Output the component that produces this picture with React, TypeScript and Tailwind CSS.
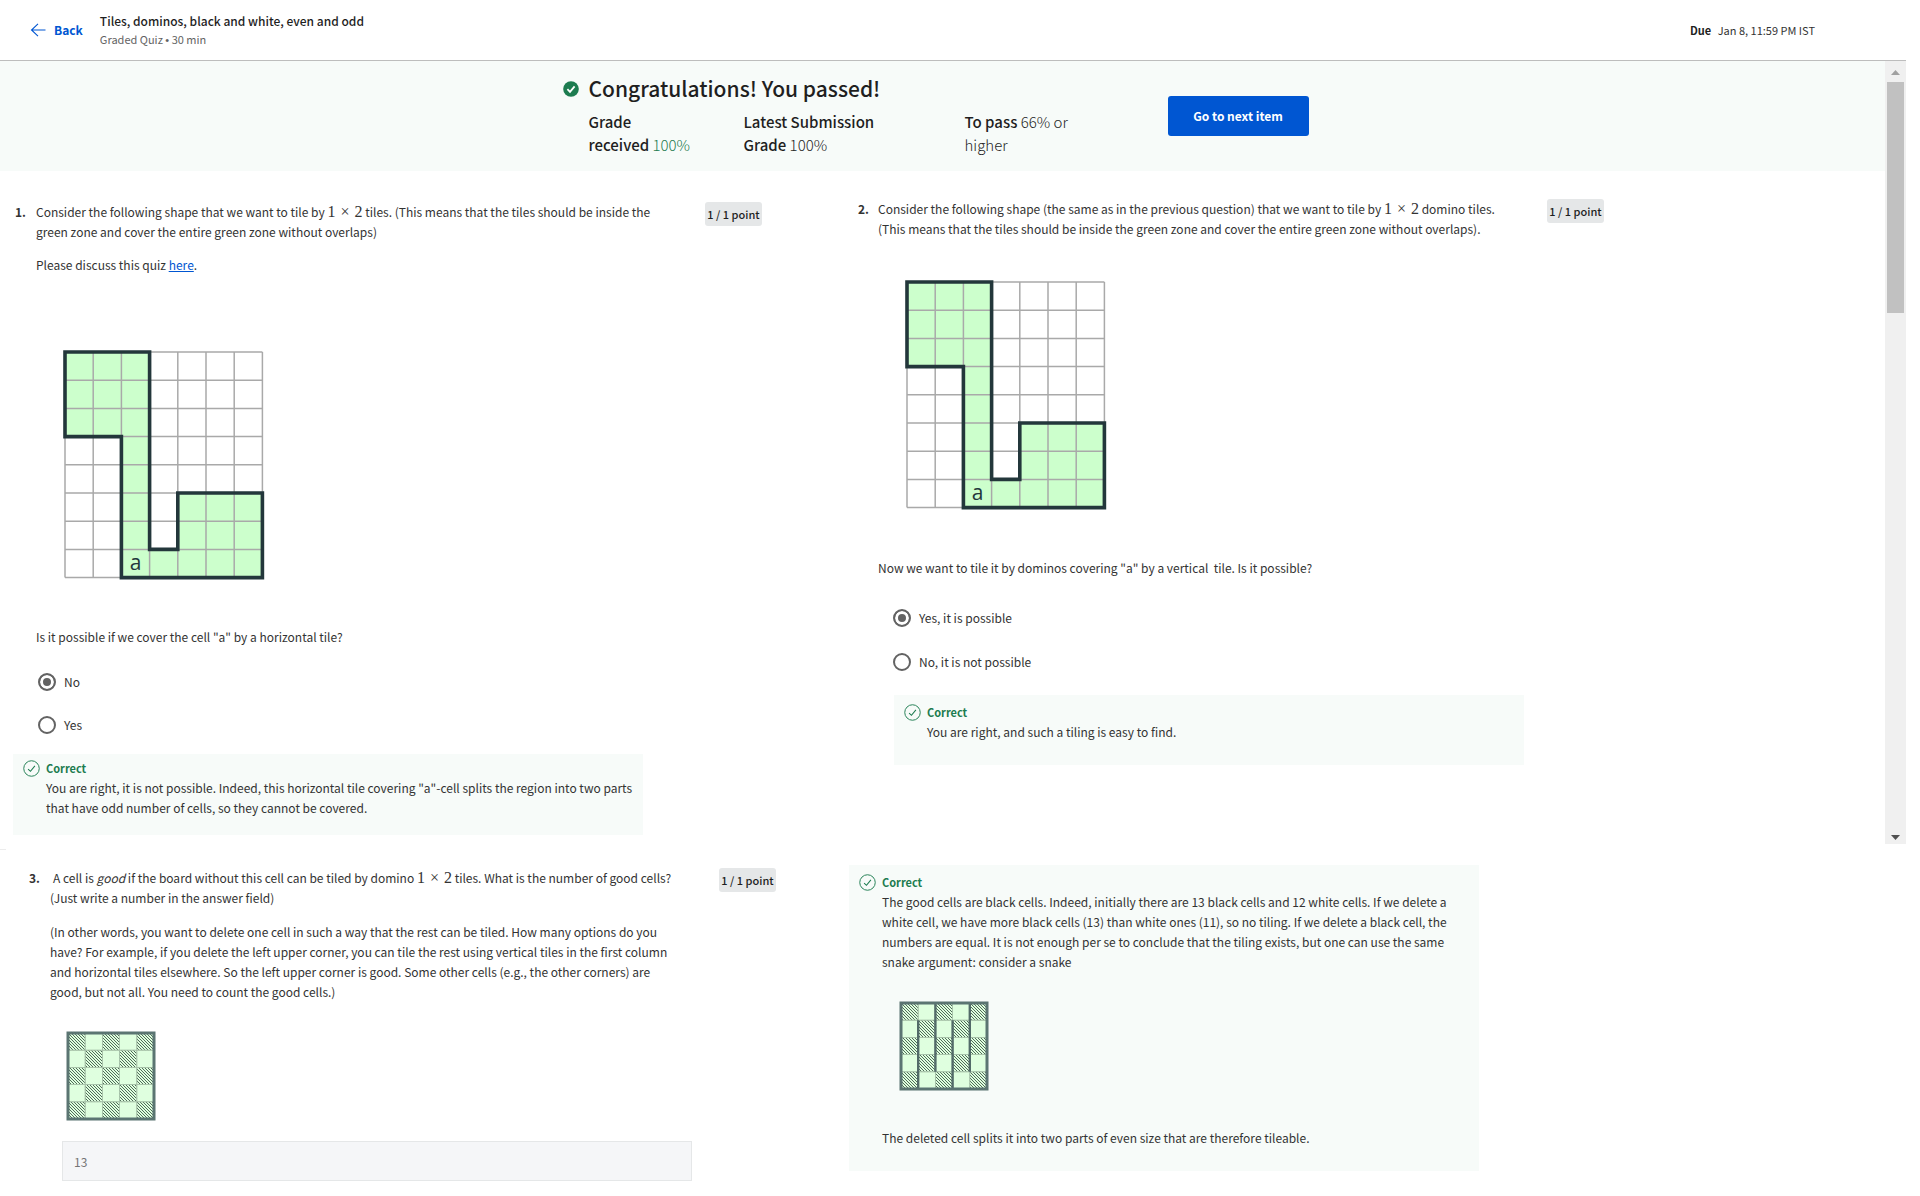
import React, { useId } from "react";

const FONT = "font-['Noto_Sans_CJK_SC','Source_Sans_Pro',sans-serif]";

function CheckCircle({ className }: { className: string }) {
  return (
    <svg viewBox="0 0 18 18" fill="none" stroke="currentColor" className={className} aria-hidden="true">
      <circle cx="9" cy="9" r="8.2" strokeWidth="1" />
      <path d="M5.4 9.6 L7.9 12 L12.6 6.2" strokeWidth="1.1" />
    </svg>
  );
}

function MathTiles() {
  return (
    <span className="font-['Liberation_Serif',serif] text-[16px] leading-none whitespace-nowrap">
      1 <span className="px-px">×</span> 2
    </span>
  );
}

function Points() {
  return (
    <span className="flex h-6 w-[57px] shrink-0 items-center justify-center rounded-[3px] bg-[#e5e7e8] text-[11px] font-medium whitespace-nowrap text-[#1f1f1f]">
      1 / 1 point
    </span>
  );
}

function Option({ name, label, checked }: { name: string; label: string; checked?: boolean }) {
  return (
    <label className="flex items-center gap-2">
      <input
        type="radio"
        name={name}
        defaultChecked={checked}
        className="size-[18px] appearance-none rounded-full border-2 border-[#636363] bg-white checked:bg-[#636363] checked:shadow-[inset_0_0_0_3px_white]"
      />
      {label}
    </label>
  );
}

function ShapeGrid({ className }: { className: string }) {
  const c = 28.2;
  const pts = [
    [0, 0], [3, 0], [3, 7], [4, 7], [4, 5], [7, 5], [7, 8], [2, 8], [2, 3], [0, 3],
  ]
    .map(([x, y]) => `${x * c},${y * c}`)
    .join(" ");
  return (
    <svg viewBox="-2 -2 202 230" className={className} role="img" aria-label="Board with a green region">
      <polygon points={pts} fill="#ccffcc" />
      {Array.from({ length: 8 }, (_, i) => (
        <line key={`v${i}`} x1={i * c} x2={i * c} y1={0} y2={8 * c} stroke="#a9a9a9" strokeWidth="1.5" />
      ))}
      {Array.from({ length: 9 }, (_, i) => (
        <line key={`h${i}`} y1={i * c} y2={i * c} x1={0} x2={7 * c} stroke="#a9a9a9" strokeWidth="1.5" />
      ))}
      <polygon points={pts} fill="none" stroke="#23373b" strokeWidth="3.6" />
      <text x={2.5 * c} y={7.5 * c + 6} textAnchor="middle" fontSize="21" fill="#23373b" fontFamily="Open Sans, sans-serif">
        a
      </text>
    </svg>
  );
}

function Checkerboard({ className, snake }: { className: string; snake?: boolean }) {
  const id = useId();
  const c = 17.2;
  return (
    <svg viewBox="-2 -2 90 90" className={className} role="img" aria-label="Five by five chessboard">
      <defs>
        <pattern id={id} width="3" height="3" patternUnits="userSpaceOnUse">
          <path d="M-1 -1 L4 4 M-1 2 L1 4 M2 -1 L4 1" stroke="#4f6b58" strokeWidth="1" />
        </pattern>
      </defs>
      <rect width={5 * c} height={5 * c} fill="#dfffdf" />
      {Array.from({ length: 25 }, (_, i) => {
        const x = (i % 5) * c;
        const y = Math.floor(i / 5) * c;
        return (
          <g key={i}>
            {i % 2 === 0 && <rect x={x} y={y} width={c} height={c} fill={`url(#${id})`} />}
            <rect x={x} y={y} width={c} height={c} fill="none" stroke="#a9c4ab" strokeWidth="0.8" />
          </g>
        );
      })}
      {snake &&
        [1, 2, 3, 4].map((i) => (
          <line
            key={i}
            x1={i * c}
            x2={i * c}
            y1={i % 2 ? c : 0}
            y2={i % 2 ? 5 * c : 4 * c}
            stroke="#526b68"
            strokeWidth="2.4"
          />
        ))}
      <rect width={5 * c} height={5 * c} fill="none" stroke="#5b7572" strokeWidth="3" />
    </svg>
  );
}

function Feedback({ children, className }: { children: React.ReactNode; className: string }) {
  return (
    <div className={`flex w-full max-w-[630px] items-start gap-1.5 bg-[#f7fbf9] px-2.5 ${className}`}>
      <CheckCircle className="mt-px size-[17px] shrink-0 text-[#1d7c50]" />
      <div>
        <p className="text-[11px] leading-[19px] font-bold text-[#1d7c50]">Correct</p>
        {children}
      </div>
    </div>
  );
}

export default function App() {
  return (
    <div className={`min-h-screen bg-white text-[12px] leading-[20px] text-[#333333] ${FONT}`}>
      <div className="mr-3.5">
        <header className="flex h-[61px] items-center border-b border-[#bdbdbd] pr-[91px] pl-[30px]">
          <a href="#" className="flex items-center gap-2 font-bold text-[#0056d2]">
            <svg viewBox="0 0 16 14" className="h-3.5 w-4" fill="none" stroke="currentColor" aria-hidden="true">
              <path d="M8 0.8 L1.5 7 L8 13.2 M1.5 7 H15.5" strokeWidth="1.1" />
            </svg>
            Back
          </a>
          <div className="ml-[17px] leading-[18px]">
            <h1 className="font-medium text-[#1f1f1f]">Tiles, dominos, black and white, even and odd</h1>
            <p className="text-[11px] text-[#636363]">
              Graded Quiz <span className="font-['Liberation_Sans',sans-serif]">•</span> 30 min
            </p>
          </div>
          <p className="ml-auto text-[11px]">
            <span className="mr-1 font-bold text-[#1f1f1f]">Due</span> Jan 8, 11:59 PM IST
          </p>
        </header>

        <div className="flex">
          <main className="min-w-0 flex-1 pb-[9px]">
            <section className="flex h-[110px] justify-center bg-[#f7fbf9] pr-3.5 text-[#1f1f1f]">
              <svg viewBox="0 0 16 16" className="mt-5 size-4 shrink-0" aria-hidden="true">
                <circle cx="8" cy="8" r="7.8" fill="#1d7c50" />
                <path d="M4.4 8.2 L7 10.8 L11.6 5.4" fill="none" stroke="#fff" strokeWidth="1.8" />
              </svg>
              <div className="ml-2.5 w-[579px] pt-3">
                <h2 className="text-[21px] leading-[30px] font-medium">Congratulations! You passed!</h2>
                <div className="mt-[7px] flex text-[15px] leading-[23px] font-light">
                  <p className="w-[155px]">
                    <span className="font-medium">Grade<br />received</span> <span className="text-[#1d7c50]">100%</span>
                  </p>
                  <p className="w-[221px] pr-20"><span className="font-medium">Latest Submission Grade</span> 100%</p>
                  <p className="w-[120px]"><span className="font-medium">To pass</span> 66% or higher</p>
                </div>
              </div>
              <button type="button" className="mt-[35px] h-10 w-[141px] rounded-[3px] bg-[#0056d2] text-[12px] font-bold text-white">
                Go to next item
              </button>
            </section>

            <div className="grid grid-cols-[843fr_1042fr]">
              <section className="pt-[31px] pl-[13px]">
                <div className="flex items-start">
                  <span className="w-[23px] shrink-0 pl-0.5 font-bold">1.</span>
                  <div className="w-[618px]">
                    <p>Consider the following shape that we want to tile by <MathTiles /> tiles. (This means that the tiles should be inside the green zone and cover the entire green zone without overlaps)</p>
                    <p className="mt-[13px]">Please discuss this quiz <a href="#" className="text-[#0056d2] underline">here</a>.</p>
                  </div>
                  <div className="ml-[51px]"><Points /></div>
                </div>
                <ShapeGrid className="mt-[75px] ml-[50px] h-[230px] w-[202px]" />
                <p className="mt-[47px] ml-[23px]">Is it possible if we cover the cell "a" by a horizontal tile?</p>
                <div className="mt-[25px] ml-[25px] flex flex-col gap-[23px]">
                  <Option name="q1" label="No" checked />
                  <Option name="q1" label="Yes" />
                </div>
                <Feedback className="mt-[19px] pt-[5px] pb-[17px]">
                  <p>You are right, it is not possible. Indeed, this horizontal tile covering "a"-cell splits the region into two parts that have odd number of cells, so they cannot be covered.</p>
                </Feedback>
              </section>

              <section className="pt-7 pl-[15px]">
                <div className="flex items-start">
                  <span className="w-5 shrink-0 font-bold">2.</span>
                  <div className="w-[630px]">
                    <p>Consider the following shape (the same as in the previous question) that we want to tile by <MathTiles /> domino tiles. (This means that the tiles should be inside the green zone and cover the entire green zone without overlaps).</p>
                  </div>
                  <div className="ml-[39px]"><Points /></div>
                </div>
                <ShapeGrid className="mt-[41px] ml-[47px] h-[230px] w-[202px]" />
                <p className="mt-12 ml-5 whitespace-pre">Now we want to tile it by dominos covering "a" by a vertical  tile. Is it possible?</p>
                <div className="mt-[30px] ml-[35px] flex flex-col gap-6">
                  <Option name="q2" label="Yes, it is possible" checked />
                  <Option name="q2" label="No, it is not possible" />
                </div>
                <Feedback className="mt-[23px] ml-9 pt-2 pb-[23px]">
                  <p>You are right, and such a tiling is easy to find.</p>
                </Feedback>
              </section>
            </div>
          </main>

          <div className="flex w-[21px] flex-col items-center self-stretch bg-[#f0f0f0]" aria-hidden="true">
            <svg viewBox="0 0 9 5" className="mt-[9px] h-[5px] w-[9px]" fill="#a0a0a0"><path d="M0 5 L4.5 0 L9 5Z" /></svg>
            <div className="mt-[7px] h-[231px] w-[17px] bg-[#c1c1c1]" />
            <svg viewBox="0 0 9 5" className="mt-auto mb-1 h-[5px] w-[9px]" fill="#505050"><path d="M0 0 L4.5 5 L9 0Z" /></svg>
          </div>
        </div>

        <div className="grid grid-cols-[849fr_1057fr] pt-[5px]">
          <section>
            <div className="w-1.5 border-t border-[#ececec]" />
            <div className="mt-[18px] flex items-start pl-[29px]">
              <span className="w-[21px] shrink-0 font-bold">3.</span>
              <div className="w-[632px]">
                <p className="indent-[3px]">A cell is <em>good</em> if the board without this cell can be tiled by domino <MathTiles /> tiles. What is the number of good cells? (Just write a number in the answer field)</p>
                <p className="mt-3.5 pr-3">(In other words, you want to delete one cell in such a way that the rest can be tiled. How many options do you have? For example, if you delete the left upper corner, you can tile the rest using vertical tiles in the first column and horizontal tiles elsewhere. So the left upper corner is good. Some other cells (e.g., the other corners) are good, but not all. You need to count the good cells.)</p>
              </div>
              <div className="ml-[37px]"><Points /></div>
            </div>
            <Checkerboard className="mt-[29px] ml-[66px] size-[90px]" />
            <input
              type="text"
              aria-label="Answer"
              defaultValue="13"
              className="mt-5 ml-[62px] block h-10 w-[630px] border border-[#e5e7e8] bg-[#f5f6f8] px-[11px] text-[12px] text-[#757575]"
            />
          </section>

          <section className="pt-4">
            <Feedback className="pt-2 pb-[23px]">
              <p className="max-w-[575px]">The good cells are black cells. Indeed, initially there are 13 black cells and 12 white cells. If we delete a white cell, we have more black cells (13) than white ones (11), so no tiling. If we delete a black cell, the numbers are equal. It is not enough per se to conclude that the tiling exists, but one can use the same snake argument: consider a snake</p>
              <Checkerboard snake className="mt-[29px] ml-[17px] size-[90px]" />
              <p className="mt-[37px]">The deleted cell splits it into two parts of even size that are therefore tileable.</p>
            </Feedback>
          </section>
        </div>
      </div>
    </div>
  );
}
